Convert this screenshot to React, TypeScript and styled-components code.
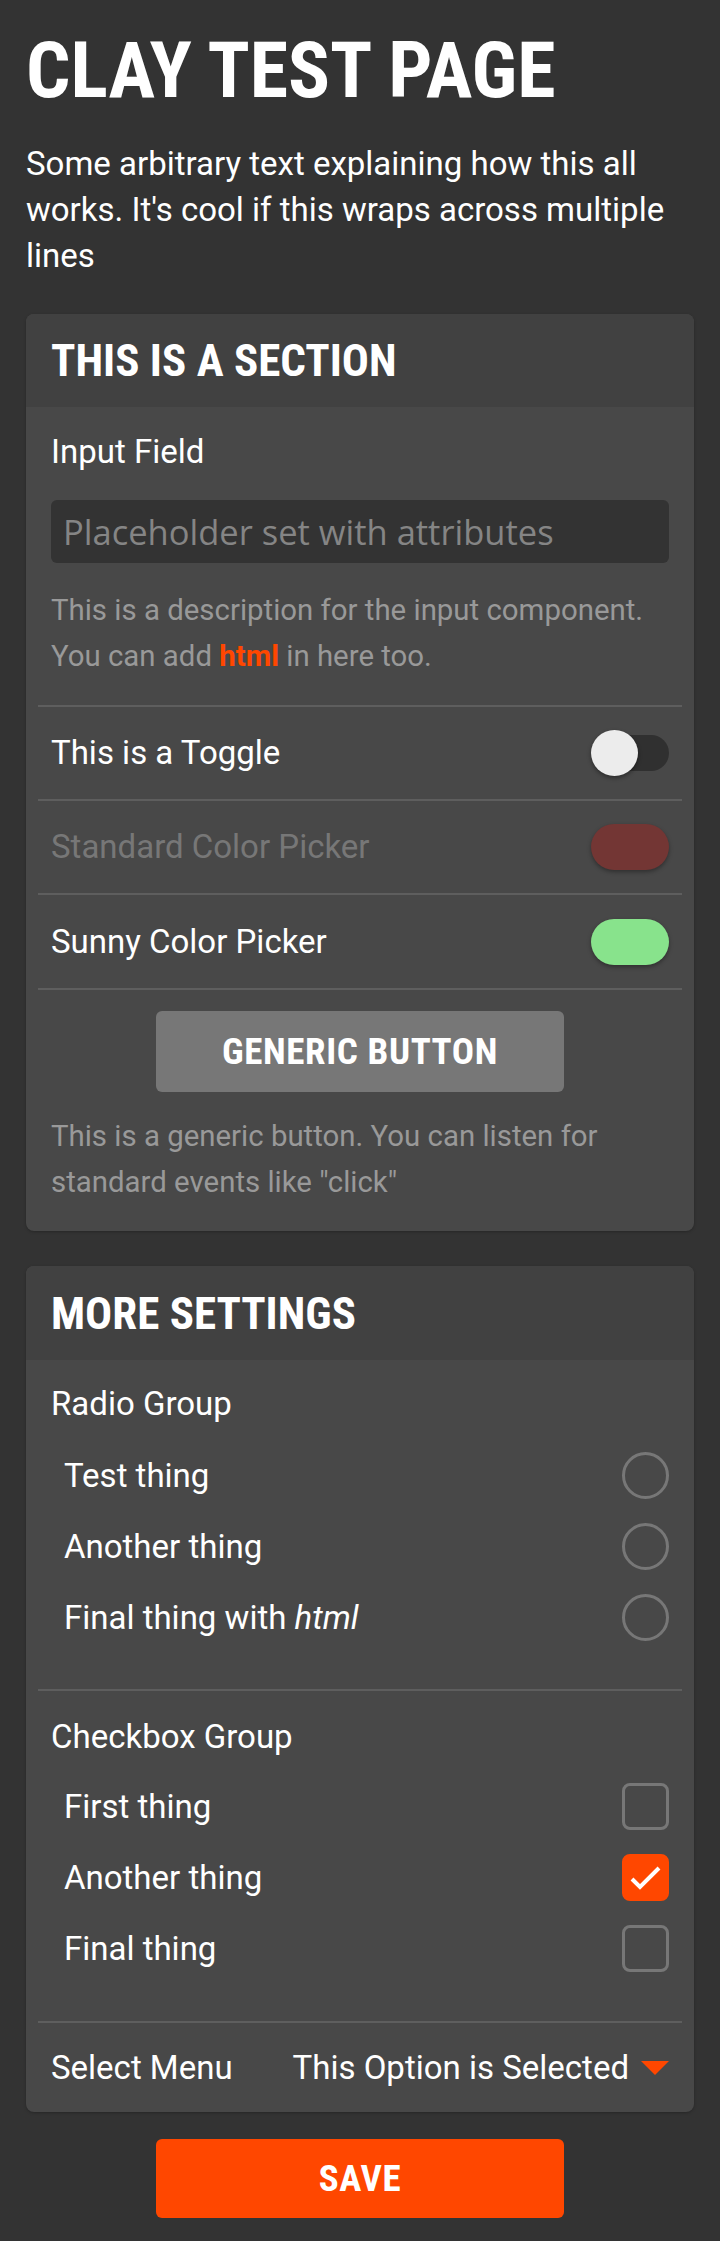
import React from "react";
import styled, { createGlobalStyle } from "styled-components";

const ORANGE = "#ff4700";

const Global = createGlobalStyle`
  body {
    margin: 0;
    background: #333333;
    color: #ffffff;
    font-family: "Roboto", "Liberation Sans", sans-serif;
  }
  * { box-sizing: border-box; }
`;

const Page = styled.main`
  padding: 25px 26px 21px;
`;

const Title = styled.h1`
  margin: 0;
  font-family: "Roboto Condensed", "Roboto", sans-serif;
  font-weight: 700;
  font-size: 78px;
  line-height: 91px;
`;

const Intro = styled.p`
  margin: 25px 0 35px;
  font-size: 33px;
  line-height: 46px;
`;

const Card = styled.section`
  background: #484848;
  border-radius: 8px;
  overflow: hidden;
  box-shadow: 0 1px 3px rgba(0, 0, 0, 0.25);
  & + & {
    margin-top: 35px;
  }
`;

const CardHeader = styled.h2<{ $h: number }>`
  margin: 0;
  height: ${({ $h }) => $h}px;
  padding: 0 25px;
  display: flex;
  align-items: center;
  background: #414141;
  font-family: "Roboto Condensed", "Roboto", sans-serif;
  font-weight: 700;
  font-size: 45px;
  line-height: 1;
`;

const CardBody = styled.div`
  padding: 0 12px;
`;

const Item = styled.div<{ $pt?: number; $pb?: number }>`
  padding: ${({ $pt = 0 }) => $pt}px 13px ${({ $pb = 0 }) => $pb}px;
  & + & {
    border-top: 2px solid #5e5e5e;
  }
`;

const Row = styled(Item)<{ $h: number }>`
  height: ${({ $h }) => $h + 2}px;
  display: flex;
  align-items: center;
  justify-content: space-between;
`;

const Label = styled.div<{ $disabled?: boolean }>`
  font-size: 33px;
  line-height: 46px;
  color: ${({ $disabled }) => ($disabled ? "#777777" : "#ffffff")};
`;

const TextInput = styled.input`
  display: block;
  width: 100%;
  height: 63px;
  margin-top: 25px;
  padding: 0 12px;
  border: none;
  border-radius: 6px;
  background: #333333;
  color: #ffffff;
  font-family: "Open Sans", "Roboto", sans-serif;
  font-size: 34.5px;
  outline: none;
  &::placeholder {
    color: #858585;
  }
`;

const Description = styled.p<{ $mt: number }>`
  margin: ${({ $mt }) => $mt}px 0 0;
  font-size: 29.4px;
  line-height: 46px;
  color: #999999;
  & strong {
    color: ${ORANGE};
    font-weight: 700;
  }
`;

const Toggle = styled.div`
  position: relative;
  width: 78px;
  height: 36px;
  border-radius: 18px;
  background: #303030;
`;

const Knob = styled.span`
  position: absolute;
  left: 0;
  top: -5px;
  width: 47px;
  height: 46px;
  border-radius: 50%;
  background: #ececec;
  box-shadow: 0 2px 4px rgba(0, 0, 0, 0.4);
`;

const Swatch = styled.div<{ $color: string }>`
  width: 78px;
  height: 46px;
  border-radius: 23px;
  background: ${({ $color }) => $color};
  box-shadow: 0 2px 4px rgba(0, 0, 0, 0.35);
`;

const Button = styled.button<{ $primary?: boolean }>`
  display: block;
  width: 408px;
  height: ${({ $primary }) => ($primary ? 79 : 81)}px;
  margin: 0 auto;
  border: none;
  border-radius: 6px;
  background: ${({ $primary }) => ($primary ? ORANGE : "#777777")};
  color: #ffffff;
  font-family: "Roboto Condensed", "Roboto", sans-serif;
  font-weight: 700;
  font-size: 37px;
  letter-spacing: 0.6px;
`;

const Options = styled.div<{ $mt: number }>`
  margin-top: ${({ $mt }) => $mt}px;
`;

const Option = styled.label`
  height: 71px;
  padding-left: 13px;
  display: flex;
  align-items: center;
  justify-content: space-between;
  font-size: 33px;
  & em {
    font-style: italic;
  }
`;

const Radio = styled.span`
  width: 47px;
  height: 47px;
  border-radius: 50%;
  border: 3px solid #777777;
`;

const Check = styled.span<{ $on?: boolean }>`
  width: 47px;
  height: 47px;
  border-radius: 8px;
  border: 3px solid ${({ $on }) => ($on ? ORANGE : "#777777")};
  background: ${({ $on }) => ($on ? ORANGE : "transparent")};
  display: flex;
  align-items: center;
  justify-content: center;
`;

const SelectValue = styled.div`
  display: flex;
  align-items: center;
  gap: 12px;
  font-size: 33px;
`;

const Footer = styled.div`
  margin-top: 27px;
`;

const radios = [
  <>Test thing</>,
  <>Another thing</>,
  <>
    Final thing with <em>html</em>
  </>,
];

const checks = [
  { label: "First thing", on: false },
  { label: "Another thing", on: true },
  { label: "Final thing", on: false },
];

export default function App() {
  return (
    <>
      <Global />
      <Page>
        <Title>CLAY TEST PAGE</Title>
        <Intro>
          Some arbitrary text explaining how this all works. It's cool if this
          wraps across multiple lines
        </Intro>

        <Card>
          <CardHeader $h={93}>THIS IS A SECTION</CardHeader>
          <CardBody>
            <Item $pt={22} $pb={26}>
              <Label>Input Field</Label>
              <TextInput placeholder="Placeholder set with attributes" />
              <Description $mt={24}>
                This is a description for the input component. You can add{" "}
                <strong>html</strong> in here too.
              </Description>
            </Item>
            <Row $h={92}>
              <Label>This is a Toggle</Label>
              <Toggle>
                <Knob />
              </Toggle>
            </Row>
            <Row $h={92}>
              <Label $disabled>Standard Color Picker</Label>
              <Swatch $color="#733634" />
            </Row>
            <Row $h={93}>
              <Label>Sunny Color Picker</Label>
              <Swatch $color="#88e38c" />
            </Row>
            <Item $pt={21} $pb={26}>
              <Button>GENERIC BUTTON</Button>
              <Description $mt={21}>
                This is a generic button. You can listen for standard events
                like "click"
              </Description>
            </Item>
          </CardBody>
        </Card>

        <Card>
          <CardHeader $h={94}>MORE SETTINGS</CardHeader>
          <CardBody>
            <Item $pt={21} $pb={36}>
              <Label>Radio Group</Label>
              <Options $mt={13}>
                {radios.map((r, i) => (
                  <Option key={i}>
                    <span>{r}</span>
                    <Radio />
                  </Option>
                ))}
              </Options>
            </Item>
            <Item $pt={23} $pb={37}>
              <Label>Checkbox Group</Label>
              <Options $mt={11}>
                {checks.map((c) => (
                  <Option key={c.label}>
                    <span>{c.label}</span>
                    <Check $on={c.on}>
                      {c.on && (
                        <svg width="36" height="30" viewBox="0 0 36 30">
                          <polyline
                            points="4,16 12,24 31,5"
                            fill="none"
                            stroke="#ffffff"
                            strokeWidth="4"
                          />
                        </svg>
                      )}
                    </Check>
                  </Option>
                ))}
              </Options>
            </Item>
            <Row $h={89}>
              <Label>Select Menu</Label>
              <SelectValue>
                This Option is Selected
                <svg width="28" height="14" viewBox="0 0 28 14">
                  <polygon points="0,0 28,0 14,14" fill={ORANGE} />
                </svg>
              </SelectValue>
            </Row>
          </CardBody>
        </Card>

        <Footer>
          <Button $primary>SAVE</Button>
        </Footer>
      </Page>
    </>
  );
}
